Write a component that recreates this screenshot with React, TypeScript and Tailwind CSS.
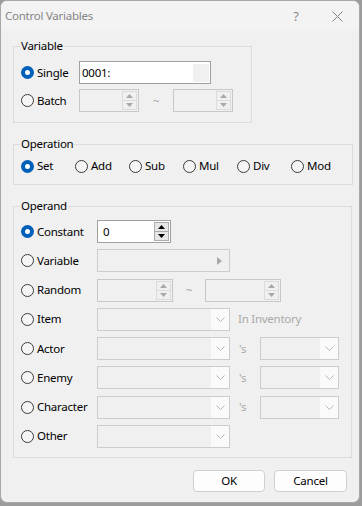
import React from 'react'

const Radio = ({ label, checked = false, className = '' }: { label: string; checked?: boolean; className?: string }) => (
  <div className={`flex items-center ${className}`}>
    {checked ? (
      <span className="w-[13px] h-[13px] rounded-full bg-[#005fb8] flex items-center justify-center shrink-0">
        <span className="w-[5px] h-[5px] rounded-full bg-white" />
      </span>
    ) : (
      <span className="w-[13px] h-[13px] rounded-full border border-[#3b3b3b] bg-[#f5f5f5] shrink-0" />
    )}
    <span className="ml-[3px] text-black">{label}</span>
  </div>
)

const Tri = ({ up, color }: { up: boolean; color: string }) => (
  <svg width="7" height="4" viewBox="0 0 7 4">
    <path d={up ? 'M0 4 L3.5 0 L7 4 Z' : 'M0 0 L3.5 4 L7 0 Z'} fill={color} />
  </svg>
)

const Spin = ({ width, value, enabled = false }: { width: string; value?: string; enabled?: boolean }) => (
  <div
    className={`${width} h-[23px] flex items-center border ${
      enabled ? 'border-[#a0a0a0] bg-white' : 'border-[#c8c8c8] bg-[#f0f0f0]'
    }`}
  >
    <span className="flex-1 pl-[5px] text-black">{value}</span>
    <div className="flex flex-col mr-[1px]">
      {[true, false].map((up) => (
        <span
          key={String(up)}
          className={`w-[15px] h-[10px] flex items-center justify-center border ${
            enabled ? 'border-[#adadad] bg-[#e6e6e6]' : 'border-[#dcdcdc] bg-[#f0f0f0]'
          } ${up ? '' : '-mt-px'}`}
        >
          <Tri up={up} color={enabled ? '#000' : '#a8a8a8'} />
        </span>
      ))}
    </div>
  </div>
)

const Combo = ({ width }: { width: string }) => (
  <div className={`${width} h-[23px] flex border border-[#cccccc] bg-[#f0f0f0]`}>
    <span className="flex-1" />
    <span className="w-[18px] bg-[#fafafa] flex items-center justify-center">
      <svg width="9" height="5" viewBox="0 0 9 5">
        <path d="M0.5 0.5 L4.5 4.5 L8.5 0.5" stroke="#b8b8b8" strokeWidth="1" fill="none" />
      </svg>
    </span>
  </div>
)

const Group = ({ label, className = '', children }: { label: string; className?: string; children: React.ReactNode }) => (
  <fieldset className={`border border-[#dcdcdc] px-[7px] ${className}`}>
    <legend className="-ml-px px-px leading-[16px] text-black">{label}</legend>
    {children}
  </fieldset>
)

const operandRows = ['Item', 'Actor', 'Enemy', 'Character', 'Other']

export default function App() {
  return (
    <div className="w-[362px] h-[506px] bg-[#9c9c9c] font-['Noto_Sans',sans-serif] text-[11.5px] tracking-[-0.25px] leading-[16px]">
      <div className="w-[360px] h-[503px] rounded-[7px] border border-[#a8a8a8] bg-[#f0f0f0] flex flex-col overflow-hidden">
        <div className="h-[30px] shrink-0 flex items-center bg-[#f3f3f3]">
          <span className="pl-[4px] text-[#858585] flex-1">Control Variables</span>
          <span className="w-[20px] text-center text-[#8a8a8a] text-[13px] mr-[26px]">?</span>
          <svg width="11" height="11" viewBox="0 0 11 11" className="mr-[16px]">
            <path d="M0.5 0.5 L10.5 10.5 M10.5 0.5 L0.5 10.5" stroke="#858585" strokeWidth="1" />
          </svg>
        </div>

        <div className="pl-[12px] pt-[7px] flex flex-col">
          <Group label="Variable" className="w-[239px] pt-[7px] pb-[10px]">
            <div className="flex flex-col gap-[5px]">
              <div className="flex items-center h-[23px]">
                <Radio label="Single" checked className="w-[58px]" />
                <div className="w-[132px] h-[23px] border border-[#a0a0a0] bg-white flex items-center">
                  <span className="flex-1 pl-[2px] text-black">0001:</span>
                  <span className="w-[16px] h-[18px] bg-[#f0f0f0] mr-[1px]" />
                </div>
              </div>
              <div className="flex items-center h-[23px]">
                <Radio label="Batch" className="w-[58px]" />
                <Spin width="w-[60px]" />
                <span className="w-[34px] text-center text-[#a8a8a8]">~</span>
                <Spin width="w-[60px]" />
              </div>
            </div>
          </Group>

          <Group label="Operation" className="w-[339px] mt-[13px] pt-[4px] pb-[8px]">
            <div className="flex items-center h-[20px]">
              {['Set', 'Add', 'Sub', 'Mul', 'Div', 'Mod'].map((op, i) => (
                <Radio key={op} label={op} checked={i === 0} className="w-[54px]" />
              ))}
            </div>
          </Group>

          <Group label="Operand" className="w-[339px] mt-[13px] pt-[6px] pb-[9px]">
            <div className="flex flex-col gap-[6.25px]">
              <div className="flex items-center h-[23px]">
                <Radio label="Constant" checked className="w-[76px]" />
                <Spin width="w-[74px]" value="0" enabled />
              </div>
              <div className="flex items-center h-[23px]">
                <Radio label="Variable" className="w-[76px]" />
                <div className="w-[133px] h-[23px] border border-[#cccccc] bg-[#f0f0f0] flex items-center justify-end pr-[7px]">
                  <svg width="5" height="8" viewBox="0 0 5 8">
                    <path d="M0 0 L5 4 L0 8 Z" fill="#a8a8a8" />
                  </svg>
                </div>
              </div>
              <div className="flex items-center h-[23px]">
                <Radio label="Random" className="w-[76px]" />
                <Spin width="w-[76px]" />
                <span className="w-[32px] text-center text-[#a8a8a8]">~</span>
                <Spin width="w-[76px]" />
              </div>
              {operandRows.map((row) => (
                <div key={row} className="flex items-center h-[23px]">
                  <Radio label={row} className="w-[76px]" />
                  <Combo width="w-[133px]" />
                  {row === 'Item' && <span className="ml-[8px] text-[#a8a8a8]">In Inventory</span>}
                  {(row === 'Actor' || row === 'Enemy' || row === 'Character') && (
                    <>
                      <span className="w-[30px] pl-[9px] text-[#a8a8a8]">'s</span>
                      <Combo width="w-[79px]" />
                    </>
                  )}
                </div>
              ))}
            </div>
          </Group>

          <div className="flex justify-end gap-[9px] mt-[12px] pr-[12px]">
            <button className="w-[72px] h-[22px] rounded-[4px] border border-[#d0d0d0] bg-[#fdfdfd] text-black">OK</button>
            <button className="w-[73px] h-[22px] rounded-[4px] border border-[#d0d0d0] bg-[#fdfdfd] text-black">Cancel</button>
          </div>
        </div>
      </div>
    </div>
  )
}
